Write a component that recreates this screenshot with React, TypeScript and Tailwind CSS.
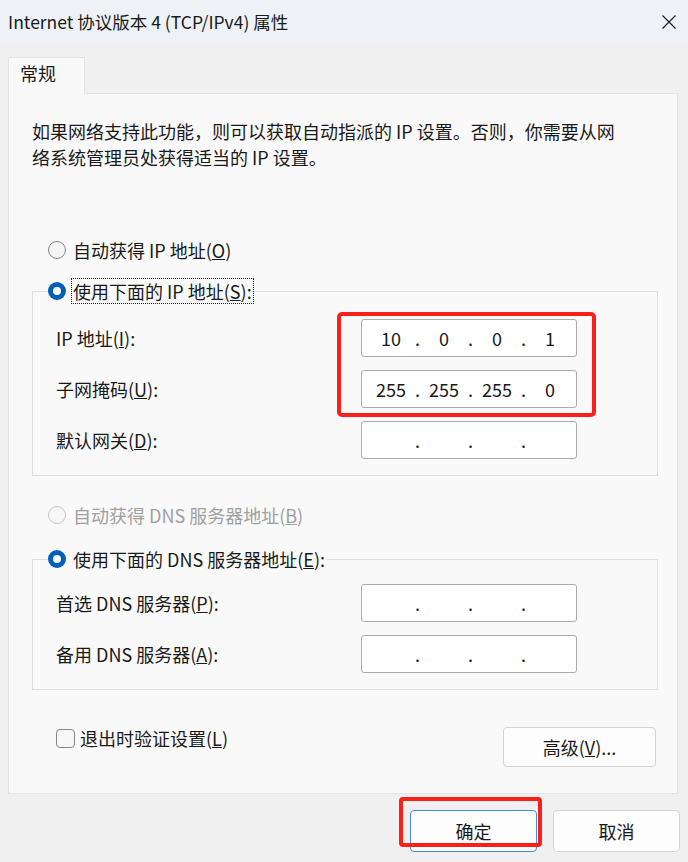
import React from "react";

function Radio({ checked, disabled }: { checked?: boolean; disabled?: boolean }) {
  if (checked) {
    return (
      <span className="w-[18px] h-[18px] shrink-0 rounded-full bg-[#005fb8] flex items-center justify-center">
        <span className="w-[8px] h-[8px] rounded-full bg-white" />
      </span>
    );
  }
  return (
    <span
      className={
        disabled
          ? "w-[18px] h-[18px] shrink-0 rounded-full border border-[#c6c6c6] bg-[#f7f7f7]"
          : "w-[18px] h-[18px] shrink-0 rounded-full border border-[#858585] bg-[#f5f5f5]"
      }
    />
  );
}

function IpBox({ parts }: { parts: string[] }) {
  return (
    <div className="w-[216px] h-[38px] border border-[#ababab] rounded-[3px] bg-white flex items-center pl-[9px] text-[18px] text-[#1a1a1a]">
      {parts.map((p, i) => (
        <React.Fragment key={i}>
          <span className="w-[40px] text-center">{p}</span>
          {i < 3 && <span className="w-[13px] text-center">.</span>}
        </React.Fragment>
      ))}
    </div>
  );
}

function Label({ children }: { children: React.ReactNode }) {
  return <div className="h-[38px] flex items-center">{children}</div>;
}

export default function App() {
  return (
    <div className="w-[688px] h-[862px] bg-[#f0f0f0] flex flex-col font-['Noto_Sans_CJK_SC','Noto_Sans',sans-serif] text-[#1a1a1a] overflow-hidden">
      {/* title bar */}
      <div className="h-[43px] bg-[#eef2f7] flex items-center justify-between pl-[8px] pr-[12px] shrink-0">
        <span className="text-[17.5px] leading-[24px]">Internet 协议版本 4 (TCP/IPv4) 属性</span>
        <svg width="14" height="14" viewBox="0 0 14 14" className="text-[#1a1a1a]">
          <path d="M0.5 0.5 L13.5 13.5 M13.5 0.5 L0.5 13.5" stroke="currentColor" strokeWidth="1.1" fill="none" />
        </svg>
      </div>

      <div className="pl-[8px] pr-[10px] pt-[14px]">
        {/* tab */}
        <div className="relative z-10 -mb-px w-[77px] h-[37px] bg-[#f9f9f9] border border-b-0 border-[#e3e3e3] pl-[11px] pt-[2px] text-[18px] leading-[26px]">
          常规
        </div>

        {/* panel */}
        <div className="h-[701px] border border-[#e3e3e3] bg-[#f9f9f9] pt-[24px] text-[18px] leading-[26px]">
          <p className="pl-[23px]">
            如果网络支持此功能，则可以获取自动指派的 IP 设置。否则，你需要从网
            <br />
            络系统管理员处获得适当的 IP 设置。
          </p>

          <div className="mt-[67px] ml-[39px] h-[26px] flex items-center gap-[5px]">
            <Radio />
            <span className="border border-transparent px-[1px]">
              自动获得 IP 地址(<u>O</u>)
            </span>
          </div>

          <fieldset className="mt-[15px] ml-[23px] mr-[19px] border border-[#dedede]">
            <legend className="ml-[15px]">
              <div className="flex items-center gap-[5px] h-[26px]">
                <Radio checked />
                <span className="h-[26px] border border-dotted border-[#222] px-[1px] flex items-center">
                  使用下面的 IP 地址(<u>S</u>):
                </span>
              </div>
            </legend>
            <div className="flex pl-[23px] pt-[15px] pb-[16px]">
              <div className="w-[305px] flex flex-col gap-[13px]">
                <Label>
                  IP 地址(<u>I</u>):
                </Label>
                <Label>
                  子网掩码(<u>U</u>):
                </Label>
                <Label>
                  默认网关(<u>D</u>):
                </Label>
              </div>
              <div className="relative flex flex-col gap-[13px]">
                <IpBox parts={["10", "0", "0", "1"]} />
                <IpBox parts={["255", "255", "255", "0"]} />
                <IpBox parts={["", "", "", ""]} />
                <div className="absolute left-[-24px] top-[-7px] w-[259px] h-[105px] border-4 border-[#fb1f1a] rounded-[5px]" />
              </div>
            </div>
          </fieldset>

          <div className="mt-[26px] ml-[39px] h-[26px] flex items-center gap-[5px] text-[#a0a0a0]">
            <Radio disabled />
            <span className="border border-transparent px-[1px]">
              自动获得 DNS 服务器地址(<u>B</u>)
            </span>
          </div>

          <fieldset className="mt-[18px] ml-[23px] mr-[19px] border border-[#dedede]">
            <legend className="ml-[15px]">
              <div className="flex items-center gap-[5px] h-[26px]">
                <Radio checked />
                <span className="h-[26px] border border-transparent px-[1px] flex items-center">
                  使用下面的 DNS 服务器地址(<u>E</u>):
                </span>
              </div>
            </legend>
            <div className="flex pl-[23px] pt-[12px] pb-[16px]">
              <div className="w-[305px] flex flex-col gap-[13px]">
                <Label>
                  首选 DNS 服务器(<u>P</u>):
                </Label>
                <Label>
                  备用 DNS 服务器(<u>A</u>):
                </Label>
              </div>
              <div className="flex flex-col gap-[13px]">
                <IpBox parts={["", "", "", ""]} />
                <IpBox parts={["", "", "", ""]} />
              </div>
            </div>
          </fieldset>

          <div className="mt-[37px] pl-[47px] pr-[21px] flex items-start justify-between">
            <div className="h-[22px] flex items-center gap-[5px]">
              <span className="w-[19px] h-[19px] rounded-[4px] border border-[#858585] bg-[#f7f7f7]" />
              <span>
                退出时验证设置(<u>L</u>)
              </span>
            </div>
            <button className="w-[153px] h-[40px] rounded-[4px] border border-[#d3d3d3] bg-[#fdfdfd] text-[18px]">
              高级(<u>V</u>)...
            </button>
          </div>
        </div>
      </div>

      {/* bottom buttons */}
      <div className="mt-[16px] pr-[8px] flex justify-end gap-[16px] text-[18px]">
        <div className="relative">
          <button className="w-[127px] h-[42px] rounded-[4px] border border-[#3f8fdc] bg-[#fdfdfd]">
            确定
          </button>
          <div className="absolute left-[-11px] top-[-13px] w-[143px] h-[50px] border-4 border-[#fb1f1a] rounded-[4px]" />
        </div>
        <button className="w-[127px] h-[42px] rounded-[4px] border border-[#d3d3d3] bg-[#fdfdfd]">
          取消
        </button>
      </div>
    </div>
  );
}
